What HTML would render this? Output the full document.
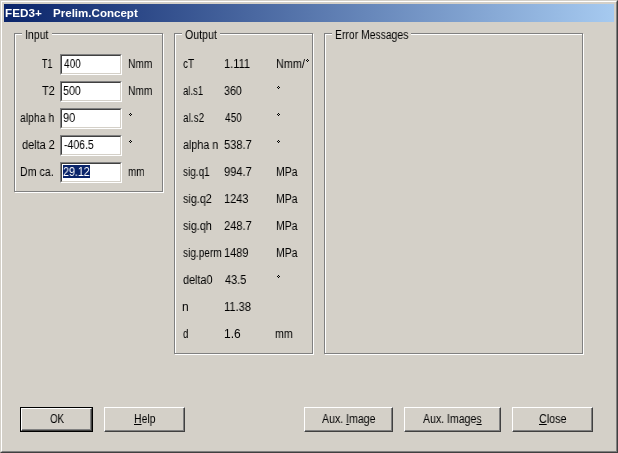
<!DOCTYPE html>
<html><head><meta charset="utf-8">
<style>
html,body{margin:0;padding:0;}
body{width:618px;height:453px;overflow:hidden;background:#d4d0c8;position:relative;font-family:"Liberation Sans",sans-serif;font-size:12px;color:#000;}
.a{position:absolute;}
.t{position:absolute;white-space:pre;line-height:13px;will-change:transform;transform-origin:0 0;}
.etch{position:absolute;box-sizing:border-box;border:1px solid #808080;}
.etchw{position:absolute;box-sizing:border-box;border:1px solid #fff;}
.gap{position:absolute;top:33px;height:2px;background:#d4d0c8;}
.edit{position:absolute;box-sizing:border-box;width:62px;height:21px;background:#fff;border-top:1px solid #808080;border-left:1px solid #808080;border-right:1px solid #fff;border-bottom:1px solid #fff;}
.edit>i{position:absolute;left:0;top:0;right:0;bottom:0;border-top:1px solid #404040;border-left:1px solid #404040;border-right:1px solid #d4d0c8;border-bottom:1px solid #d4d0c8;}
.btn{position:absolute;box-sizing:border-box;height:25px;border-top:1px solid #fff;border-left:1px solid #fff;border-right:1px solid #404040;border-bottom:1px solid #404040;}
.btn>i{position:absolute;left:0;top:0;right:0;bottom:0;border-right:1px solid #808080;border-bottom:1px solid #808080;}
u{text-decoration:underline;}
.deg{position:absolute;width:1px;height:1px;box-shadow:0 -1px #000,-1px 0 #000,1px 0 #000,0 1px #000;}
</style></head><body>
<div class="a" style="left:0;top:0;width:618px;height:453px;box-sizing:border-box;border-top:1px solid #d4d0c8;border-left:1px solid #d4d0c8;border-right:1px solid #404040;border-bottom:1px solid #404040;"></div>
<div class="a" style="left:1px;top:1px;width:616px;height:451px;box-sizing:border-box;border-top:1px solid #fff;border-left:1px solid #fff;border-right:1px solid #808080;border-bottom:1px solid #808080;"></div>
<div class="a" style="left:4px;top:4px;width:610px;height:18px;background:linear-gradient(to right,#0a246a,#a6caf0);"></div>
<div class="t" style="left:4.94px;top:7px;color:#fff;font-weight:bold;font-size:11px;transform:scaleX(1.0625);">FED3+</div>
<div class="t" style="left:52.95px;top:7px;color:#fff;font-weight:bold;font-size:11px;transform:scaleX(1.0506);">Prelim.Concept</div>
<div class="etchw" style="left:15px;top:34px;width:149px;height:159px;"></div>
<div class="etch" style="left:14px;top:33px;width:149px;height:159px;"></div>
<div class="gap" style="left:22px;width:30px;"></div>
<div class="etchw" style="left:175px;top:34px;width:139px;height:321px;"></div>
<div class="etch" style="left:174px;top:33px;width:139px;height:321px;"></div>
<div class="gap" style="left:182px;width:38px;"></div>
<div class="etchw" style="left:325px;top:34px;width:259px;height:321px;"></div>
<div class="etch" style="left:324px;top:33px;width:259px;height:321px;"></div>
<div class="gap" style="left:332px;width:79px;"></div>
<div class="edit" style="left:60px;top:54px;"><i></i></div>
<div class="edit" style="left:60px;top:81px;"><i></i></div>
<div class="edit" style="left:60px;top:108px;"><i></i></div>
<div class="edit" style="left:60px;top:135px;"><i></i></div>
<div class="edit" style="left:60px;top:162px;"><i></i></div>
<div class="a" style="left:63px;top:165px;width:27px;height:13px;background:#0a246a;"></div>
<div class="deg" style="left:130px;top:114px;"></div>
<div class="deg" style="left:130px;top:141px;"></div>
<div class="deg" style="left:307px;top:60px;"></div>
<div class="deg" style="left:278px;top:87px;"></div>
<div class="deg" style="left:278px;top:114px;"></div>
<div class="deg" style="left:278px;top:141px;"></div>
<div class="deg" style="left:278px;top:276px;"></div>
<div class="a" style="left:20px;top:407px;width:73px;height:25px;box-sizing:border-box;border:1px solid #000;"></div>
<div class="btn" style="left:21px;top:408px;width:71px;height:23px;"><i></i></div>
<div class="btn" style="left:104px;top:407px;width:81px;"><i></i></div>
<div class="btn" style="left:304px;top:407px;width:89px;"><i></i></div>
<div class="btn" style="left:404px;top:407px;width:97px;"><i></i></div>
<div class="btn" style="left:512px;top:407px;width:81px;"><i></i></div>
<div class="t" style="left:25.12px;top:29px;transform:scaleX(0.8800);">Input</div>
<div class="t" style="left:185.00px;top:29px;transform:scaleX(0.8857);">Output</div>
<div class="t" style="left:335.13px;top:29px;transform:scaleX(0.8659);">Error Messages</div>
<div class="t" style="left:42.00px;top:58px;transform:scaleX(0.7500);">T1</div>
<div class="t" style="left:42.00px;top:85px;transform:scaleX(0.9167);">T2</div>
<div class="t" style="left:20.00px;top:112px;transform:scaleX(0.8684);">alpha h</div>
<div class="t" style="left:22.00px;top:139px;transform:scaleX(0.9118);">delta 2</div>
<div class="t" style="left:20.11px;top:166px;transform:scaleX(0.8857);">Dm ca.</div>
<div class="t" style="left:64.00px;top:58px;transform:scaleX(0.8421);">400</div>
<div class="t" style="left:63.11px;top:85px;transform:scaleX(0.8889);">500</div>
<div class="t" style="left:63.09px;top:112px;transform:scaleX(0.9091);">90</div>
<div class="t" style="left:64.00px;top:139px;transform:scaleX(0.8750);">-406.5</div>
<div class="t" style="left:63.11px;top:166px;transform:scaleX(0.8889);color:#fff;">29.12</div>
<div class="t" style="left:128.15px;top:58px;transform:scaleX(0.8462);">Nmm</div>
<div class="t" style="left:128.15px;top:85px;transform:scaleX(0.8462);">Nmm</div>
<div class="t" style="left:128.18px;top:166px;transform:scaleX(0.8235);">mm</div>
<div class="t" style="left:183.00px;top:58px;transform:scaleX(0.8333);">cT</div>
<div class="t" style="left:183.00px;top:85px;transform:scaleX(0.7917);">al.s1</div>
<div class="t" style="left:183.00px;top:112px;transform:scaleX(0.8333);">al.s2</div>
<div class="t" style="left:183.00px;top:139px;transform:scaleX(0.8947);">alpha n</div>
<div class="t" style="left:183.00px;top:166px;transform:scaleX(0.8333);">sig.q1</div>
<div class="t" style="left:183.00px;top:193px;transform:scaleX(0.9000);">sig.q2</div>
<div class="t" style="left:183.00px;top:220px;transform:scaleX(0.9000);">sig.qh</div>
<div class="t" style="left:183.00px;top:247px;transform:scaleX(0.8409);">sig.perm</div>
<div class="t" style="left:183.00px;top:274px;transform:scaleX(0.9032);">delta0</div>
<div class="t" style="left:182.00px;top:301px;transform:scaleX(1.0000);">n</div>
<div class="t" style="left:183.00px;top:328px;transform:scaleX(0.8000);">d</div>
<div class="t" style="left:224.08px;top:58px;transform:scaleX(0.9231);">1.111</div>
<div class="t" style="left:224.11px;top:85px;transform:scaleX(0.8889);">360</div>
<div class="t" style="left:225.00px;top:112px;transform:scaleX(0.8421);">450</div>
<div class="t" style="left:224.07px;top:139px;transform:scaleX(0.9259);">538.7</div>
<div class="t" style="left:224.07px;top:166px;transform:scaleX(0.9259);">994.7</div>
<div class="t" style="left:224.08px;top:193px;transform:scaleX(0.9167);">1243</div>
<div class="t" style="left:224.07px;top:220px;transform:scaleX(0.9259);">248.7</div>
<div class="t" style="left:224.08px;top:247px;transform:scaleX(0.9167);">1489</div>
<div class="t" style="left:225.00px;top:274px;transform:scaleX(0.9091);">43.5</div>
<div class="t" style="left:224.07px;top:301px;transform:scaleX(0.9259);">11.38</div>
<div class="t" style="left:224.00px;top:328px;transform:scaleX(1.0000);">1.6</div>
<div class="t" style="left:276.10px;top:58px;transform:scaleX(0.9000);">Nmm/</div>
<div class="t" style="left:276.13px;top:166px;transform:scaleX(0.8696);">MPa</div>
<div class="t" style="left:276.13px;top:193px;transform:scaleX(0.8696);">MPa</div>
<div class="t" style="left:276.13px;top:220px;transform:scaleX(0.8696);">MPa</div>
<div class="t" style="left:276.13px;top:247px;transform:scaleX(0.8696);">MPa</div>
<div class="t" style="left:275.12px;top:328px;transform:scaleX(0.8824);">mm</div>
<div class="t" style="left:50.00px;top:413px;transform:scaleX(0.8125);">OK</div>
<div class="t" style="left:134.00px;top:413px;transform:scaleX(0.8696);"><u>H</u>elp</div>
<div class="t" style="left:322.00px;top:413px;transform:scaleX(0.8814);">Aux. <u>I</u>mage</div>
<div class="t" style="left:423.00px;top:413px;transform:scaleX(0.8788);">Aux. Image<u>s</u></div>
<div class="t" style="left:539.00px;top:413px;transform:scaleX(0.8966);"><u>C</u>lose</div>
</body></html>
